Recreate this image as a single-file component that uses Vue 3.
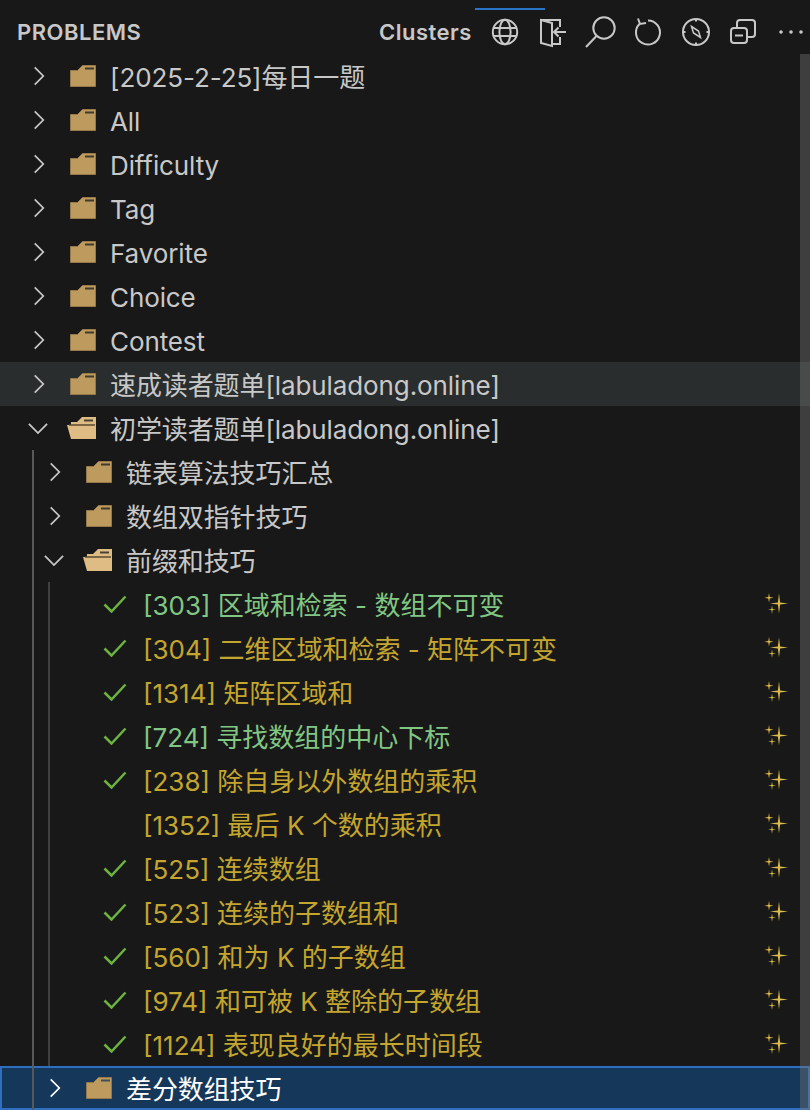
<template>
  <div class="sidebar">
    <header class="pane-header">
      <span class="pane-title">PROBLEMS</span>
      <span class="pane-desc">Clusters</span>
      <div class="actions">
        <svg viewBox="0 0 30 30" class="action"><circle cx="15" cy="15" r="12.2" /><ellipse cx="15" cy="15" rx="5.6" ry="12.2" /><path d="M3.5 11h23M3.5 19h23" /></svg>
        <svg viewBox="0 0 30 30" class="action"><path d="M3 3l11 3v23l-11-3zM3 3h19v7M22 20v7h-8M28 15H16M20.500 10.500L16 15l4.500 4.500" /></svg>
        <svg viewBox="0 0 30 30" class="action"><circle cx="19" cy="11" r="10.700" /><path d="M11.500 19L1 30" /></svg>
        <svg viewBox="0 0 30 30" class="action"><path d="M6.500 7A12 12 0 1 0 15 3.500M5 1.500l2 5.500 6-1" /></svg>
        <svg viewBox="0 0 30 30" class="action"><circle cx="15" cy="15" r="13" /><path d="M15 2v2.500M15 25.500V28M2 15h2.500M25.500 15H28" /><path class="thin" d="M10.500 9.500l7 4.500 2 6.500-7-4.500z" /></svg>
        <svg viewBox="0 0 30 30" class="action"><path d="M9 11V6a3 3 0 0 1 3-3h12a3 3 0 0 1 3 3v11a3 3 0 0 1-3 3h-5" /><rect x="3" y="11" width="16" height="15" rx="3" /><path d="M7 18.500h8" /></svg>
        <svg viewBox="0 0 30 30" class="action dots"><circle cx="5" cy="15" r="1.800" /><circle cx="15" cy="15" r="1.800" /><circle cx="25" cy="15" r="1.800" /></svg>
      </div>
      <div class="progress"></div>
    </header>

    <div class="tree">
      <div v-for="name in topFolders" :key="name" class="row" :class="{ hover: name === hoverRow }">
        <svg viewBox="0 0 14 22" class="chevron"><path d="M2 1l10 10L2 21" /></svg>
        <svg viewBox="0 0 26 22" class="folder"><path d="M.5 5.500h7l5-5h13v21H.5z" /><path class="slot" d="M15 2.500h9v2h-9z" /></svg>
        <span class="label">{{ name }}</span>
      </div>

      <div class="row">
        <svg viewBox="0 0 22 14" class="chevron-down"><path d="M1 2l10 10L21 2" /></svg>
        <svg viewBox="0 0 29 22" class="folder-open"><path d="M4 8V5h6l5-5h14v22H4L0 8z" /><path class="slot" d="M17 2.500h9v2h-9z" /><path class="crease" d="M2 8h26" /></svg>
        <span class="label">初学读者题单[labuladong.online]</span>
      </div>

      <div class="group">
        <div class="row nested">
          <svg viewBox="0 0 14 22" class="chevron"><path d="M2 1l10 10L2 21" /></svg>
          <svg viewBox="0 0 26 22" class="folder"><path d="M.5 5.500h7l5-5h13v21H.5z" /><path class="slot" d="M15 2.500h9v2h-9z" /></svg>
          <span class="label">链表算法技巧汇总</span>
        </div>
        <div class="row nested">
          <svg viewBox="0 0 14 22" class="chevron"><path d="M2 1l10 10L2 21" /></svg>
          <svg viewBox="0 0 26 22" class="folder"><path d="M.5 5.500h7l5-5h13v21H.5z" /><path class="slot" d="M15 2.500h9v2h-9z" /></svg>
          <span class="label">数组双指针技巧</span>
        </div>
        <div class="row nested">
          <svg viewBox="0 0 22 14" class="chevron-down"><path d="M1 2l10 10L21 2" /></svg>
          <svg viewBox="0 0 29 22" class="folder-open"><path d="M4 8V5h6l5-5h14v22H4L0 8z" /><path class="slot" d="M17 2.500h9v2h-9z" /><path class="crease" d="M2 8h26" /></svg>
          <span class="label">前缀和技巧</span>
        </div>

        <div class="group inner">
          <div v-for="item in problems" :key="item.title" class="row leaf">
            <svg viewBox="0 0 24 18" class="check"><path v-if="item.done" d="M1.500 9.500L8.500 16.500 22.500 1.500" /></svg>
            <span class="label" :class="item.tone">{{ item.title }}</span>
            <svg viewBox="0 0 26 26" class="sparkle">
              <path d="M15 2.500l1.100 8.900 7.900 1.100-7.900 1.100L15 22.500l-1.100-8.900L6 12.500l7.900-1.100z" />
              <path d="M5 2l.7 4 3.800.7-3.800.7L5 11.500l-.7-4.100L.5 6.700l3.800-.7z" />
              <path d="M8 14.500l.6 3.400 3.400.6-3.400.6L8 23l-.6-3.900-3.400-.6 3.400-.6z" />
            </svg>
          </div>
        </div>

        <div class="row nested selected">
          <svg viewBox="0 0 14 22" class="chevron"><path d="M2 1l10 10L2 21" /></svg>
          <svg viewBox="0 0 26 22" class="folder"><path d="M.5 5.500h7l5-5h13v21H.5z" /><path class="slot dark" d="M15 2.500h9v2h-9z" /></svg>
          <span class="label">差分数组技巧</span>
        </div>
      </div>

      <div class="scrollbar"></div>
    </div>
  </div>
</template>

<script setup>
const topFolders = [
  '[2025-2-25]每日一题',
  'All',
  'Difficulty',
  'Tag',
  'Favorite',
  'Choice',
  'Contest',
  '速成读者题单[labuladong.online]',
]
const hoverRow = '速成读者题单[labuladong.online]'

const problems = [
  { title: '[303] 区域和检索 - 数组不可变', done: true, tone: 'green' },
  { title: '[304] 二维区域和检索 - 矩阵不可变', done: true, tone: 'gold' },
  { title: '[1314] 矩阵区域和', done: true, tone: 'gold' },
  { title: '[724] 寻找数组的中心下标', done: true, tone: 'green' },
  { title: '[238] 除自身以外数组的乘积', done: true, tone: 'gold' },
  { title: '[1352] 最后 K 个数的乘积', done: false, tone: 'gold' },
  { title: '[525] 连续数组', done: true, tone: 'gold' },
  { title: '[523] 连续的子数组和', done: true, tone: 'gold' },
  { title: '[560] 和为 K 的子数组', done: true, tone: 'gold' },
  { title: '[974] 和可被 K 整除的子数组', done: true, tone: 'gold' },
  { title: '[1124] 表现良好的最长时间段', done: true, tone: 'gold' },
]
</script>

<style>
html, body { margin: 0; background: #181818; }
</style>

<style scoped>
.sidebar {
  width: 810px;
  height: 1110px;
  overflow: hidden;
  background: #181818;
  color: #c8c8c8;
  font-family: Inter, "Noto Sans CJK SC", sans-serif;
}
.pane-header {
  position: relative;
  display: flex;
  align-items: center;
  height: 54px;
  padding: 10px 4px 0 17px;
  box-sizing: border-box;
  font-size: 22px;
  font-weight: 600;
  letter-spacing: 0.5px;
}
.pane-title { flex: 1; }
.pane-desc { margin-right: 18px; }
.actions { display: flex; gap: 17.700px; }
.action {
  width: 30px;
  height: 30px;
  overflow: visible;
  fill: none;
  stroke: #c8c8c8;
  stroke-width: 2;
}
.action .thin { stroke-width: 1.500; }
.action.dots { fill: #c8c8c8; stroke: none; }
.progress {
  position: absolute;
  left: 475px;
  top: 8px;
  width: 70px;
  height: 2px;
  background: #2b73c4;
}
.tree { position: relative; }
.row {
  display: flex;
  align-items: center;
  height: 44px;
  box-sizing: border-box;
  padding-left: 33px;
  font-size: 26px;
  line-height: 32px;
  letter-spacing: -0.1px;
  white-space: nowrap;
}
.row.hover { background: #2a2d2e; }
.row.nested { padding-left: 49px; }
.row.leaf { padding-left: 103px; padding-right: 20px; letter-spacing: 0; }
.row.selected {
  background: #14375a;
  outline: 2px solid #2f6fbf;
  outline-offset: -2px;
  color: #ffffff;
}
.chevron {
  width: 12px;
  height: 22px;
  margin-right: 25px;
  fill: none;
  stroke: #c8c8c8;
  stroke-width: 2;
}
.selected .chevron { stroke: #ffffff; }
.chevron-down {
  width: 20px;
  height: 13px;
  margin-left: -5px;
  margin-right: 19px;
  fill: none;
  stroke: #c8c8c8;
  stroke-width: 2;
}
.folder { width: 26px; height: 22px; margin-right: 14px; flex: none; fill: #bd9b5e; stroke: #96794a; }
.folder-open { width: 29px; height: 22px; margin-right: 14px; flex: none; fill: #dfbc84; }
.slot { fill: #181818; stroke: none; opacity: 0.75; }
.slot.dark { fill: #14375a; }
.crease { fill: none; stroke: #5a4a30; stroke-width: 1.500; }
.check {
  width: 24px;
  height: 18px;
  margin-right: 16px;
  flex: none;
  fill: none;
  stroke: #6db33f;
  stroke-width: 2.500;
}
.label { flex: 1; padding-top: 4px; }
.label.green { color: #81c784; }
.label.gold { color: #c4a62f; }
.sparkle { width: 26px; height: 26px; flex: none; fill: #dcbc4a; filter: blur(0.3px); }
.group { position: relative; }
.group::before {
  content: "";
  position: absolute;
  left: 32px;
  top: 0;
  bottom: 0;
  width: 2px;
  background: #585858;
  z-index: 1;
}
.group.inner::before { left: 48px; background: #404040; }
.scrollbar {
  position: absolute;
  right: 0;
  top: 0;
  bottom: 0;
  width: 10px;
  background: rgba(121, 121, 121, 0.4);
  z-index: 2;
}
</style>
